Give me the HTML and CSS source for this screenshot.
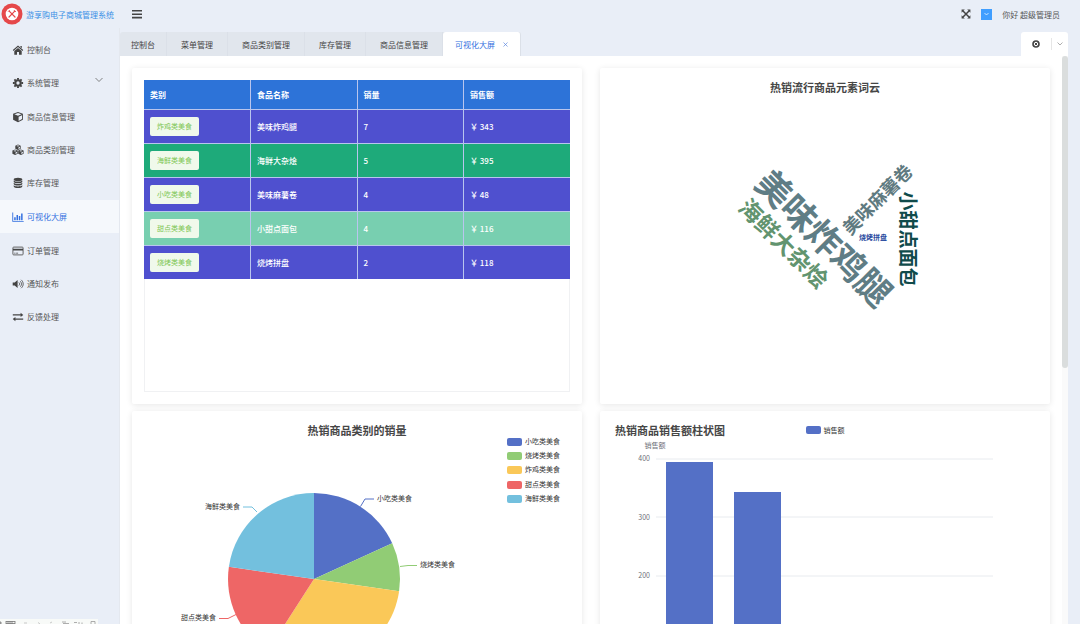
FILE: index.html
```
<!DOCTYPE html>
<html lang="zh-CN">
<head>
    <meta charset="UTF-8">
    <meta name="viewport" content="width=device-width, initial-scale=1.0">
    <title>游享购电子商城管理系统</title>
    <link rel="stylesheet" href="styles.css">
</head>
<body>

    <header class="header">
        <a class="brand" href="#">
            <svg class="logo" viewBox="0 0 22 22">
                <circle cx="11" cy="11" r="10.5" fill="#e5484a"/>
                <circle cx="11" cy="11" r="6.3" fill="#fff"/>
                <path d="M8.2 8.2l5.8 5.8M13.8 8.2L8 14" stroke="#e5484a" stroke-width="1.2" stroke-linecap="round"/>
                <path d="M7.2 8.6l1.4-1.4M13 7.2l1.8 1.8" stroke="#e5484a" stroke-width="1"/>
            </svg>
            <span>游享购电子商城管理系统</span>
        </a>
        <button class="btn toggle" type="button" aria-label="折叠菜单">
            <svg width="12" height="10" viewBox="0 0 12 10"><path d="M1 1h10v1.6H1zM1 4.4h10V6H1zM1 7.8h10v1.6H1z"/></svg>
        </button>
        <div class="user">
            <button class="btn" type="button" aria-label="全屏">
                <svg width="10" height="10" viewBox="0 0 10 10">
                    <path d="M.6.6h3.2L.6 3.8zM9.4.6v3.2L6.2.6zM.6 9.4V6.2l3.2 3.2zM9.4 9.4H6.2l3.2-3.2z"/>
                    <path d="M2 2l6 6M8 2L2 8" stroke="#444" stroke-width="1.5"/>
                </svg>
            </button>
            <button class="btn avatar" type="button" aria-label="用户菜单">
                <svg width="5" height="4" viewBox="0 0 5 4"><path d="M.5 1l2 2 2-2" fill="none" stroke="#fff" stroke-width=".7"/></svg>
            </button>
            <span>你好 超级管理员</span>
        </div>
    </header>

    <div class="wrap">
        <nav class="side">
            <a class="menu" href="#">
                <svg class="icon" viewBox="0 0 12 12"><path d="M6 1.6l5.2 4.5-.7.8L6 3.1 1.5 6.9l-.7-.8zM8.4 2h1.4v2.3L8.4 3.1zM6 4l3.7 3.1v3.6H7V7.9H5v2.8H2.3V7.1z"/></svg>
                <span>控制台</span>
            </a>
            <a class="menu sub" href="#">
                <svg class="icon" viewBox="0 0 12 12">
                    <circle cx="6" cy="6" r="2.7" fill="none" stroke="#444" stroke-width="2.1"/>
                    <path d="M6 .9v1.8M6 9.3v1.8M.9 6h1.8M9.3 6h1.8M2.4 2.4l1.2 1.2M8.4 8.4l1.2 1.2M9.6 2.4L8.4 3.6M3.6 8.4L2.4 9.6" stroke="#444" stroke-width="1.9"/>
                </svg>
                <span>系统管理</span>
                <svg class="arrow" viewBox="0 0 8 6"><path d="M.5 1L4 4.5 7.5 1" fill="none" stroke="#666" stroke-width=".8"/></svg>
            </a>
            <a class="menu" href="#">
                <svg class="icon" viewBox="0 0 12 12">
                    <path d="M6 .9l4.9 1.9v5.9L6 11.3 1.1 8.7V2.8z"/>
                    <path d="M6 2l3.6 1.3L6 4.7 2.4 3.3zM6.6 5.7l3.4-1.4v3.8L6.6 9.9z" fill="#e9eef7"/>
                </svg>
                <span>商品信息管理</span>
            </a>
            <a class="menu" href="#">
                <svg class="icon" viewBox="0 0 12 12">
                    <path d="M6 .6l2.7 1.1v3L6 5.9 3.3 4.7v-3zM3.1 5.5l2.7 1.1v3.1L3.1 11 .4 9.7V6.6zM8.9 5.5l2.7 1.1v3.1L8.9 11 6.2 9.7V6.6z"/>
                    <path d="M6 1.3l1.6.6L6 2.6l-1.6-.7zM3.1 6.3l1.6.6-1.6.7-1.6-.7zM8.9 6.3l1.6.6-1.6.7-1.6-.7zM6.4 3.4L8 2.7v1.6l-1.6.7zM3.5 8.4l1.6-.7v1.6l-1.6.8zM9.3 8.4l1.6-.7v1.6l-1.6.8z" fill="#e9eef7"/>
                </svg>
                <span>商品类别管理</span>
            </a>
            <a class="menu" href="#">
                <svg class="icon" viewBox="0 0 12 12">
                    <ellipse cx="6" cy="2.4" rx="4.3" ry="1.6"/>
                    <path d="M1.7 3.4c1.6 1.6 7 1.6 8.6 0v1.3c-.6 2-8 2-8.6 0zM1.7 5.8c1.6 1.6 7 1.6 8.6 0v1.3c-.6 2-8 2-8.6 0zM1.7 8.2c1.6 1.6 7 1.6 8.6 0v1.3c-.6 2-8 2-8.6 0z"/>
                </svg>
                <span>库存管理</span>
            </a>
            <a class="menu active" href="#">
                <svg class="icon" viewBox="0 0 12 12"><path d="M.3 1.6h.9v8.3h10.5v.9H.3zM2.2 6.3h1.5v2.9H2.2zM4.5 4h1.5v5.2H4.5zM6.8 5.1h1.5v4.1H6.8zM9.1 2.6h1.5v6.6H9.1z"/></svg>
                <span>可视化大屏</span>
            </a>
            <a class="menu" href="#">
                <svg class="icon" viewBox="0 0 12 12">
                    <rect x=".9" y="2.1" width="10.2" height="7.8" rx=".8" fill="none" stroke="#555" stroke-width=".9"/>
                    <path d="M1 3.7h10v1.9H1zM2.2 7.8h1.3v.8H2.2zM4.1 7.8h2v.8h-2z"/>
                </svg>
                <span>订单管理</span>
            </a>
            <a class="menu" href="#">
                <svg class="icon" viewBox="0 0 12 12">
                    <path d="M.7 4.4h2L5.6 1.9v8.2L2.7 7.6h-2z"/>
                    <path d="M6.9 4.5c1 .8 1 2.2 0 3M8 3.1c2 1.6 2 4.2 0 5.8M9.1 1.8c2.8 2.3 2.8 6.1 0 8.4" fill="none" stroke="#555" stroke-width=".9"/>
                </svg>
                <span>通知发布</span>
            </a>
            <a class="menu" href="#">
                <svg class="icon" viewBox="0 0 12 12"><path d="M.8 3.3h7.8V1.8l2.7 2.1-2.7 2.2V4.6H.8zM11.2 7.4H3.4V5.9L.7 8l2.7 2.2V8.7h7.8z"/></svg>
                <span>反馈处理</span>
            </a>
        </nav>

        <main class="main">
            <div class="tabbar">
                <div class="tabs">
                    <a class="tab" href="#">控制台</a>
                    <a class="tab" href="#">菜单管理</a>
                    <a class="tab" href="#">商品类别管理</a>
                    <a class="tab" href="#">库存管理</a>
                    <a class="tab" href="#">商品信息管理</a>
                    <a class="tab active" href="#">可视化大屏
                        <svg width="5" height="5" viewBox="0 0 5 5"><path d="M.5.5l4 4M4.5.5l-4 4" stroke="#5b86e0" stroke-width=".7"/></svg>
                    </a>
                </div>
                <div class="tools">
                    <button class="btn close" type="button" aria-label="关闭标签">
                        <svg width="8" height="8" viewBox="0 0 8 8">
                            <circle cx="4" cy="4" r="3" fill="none" stroke="#444" stroke-width="1.6"/>
                            <path d="M2.6 2.6l2.8 2.8M5.4 2.6L2.6 5.4" stroke="#444" stroke-width="1"/>
                        </svg>
                    </button>
                    <button class="btn more" type="button" aria-label="更多">
                        <svg width="6" height="4" viewBox="0 0 6 4"><path d="M.5.5L3 3 5.5.5" fill="none" stroke="#999" stroke-width=".8"/></svg>
                    </button>
                </div>
            </div>

            <div class="content">
                <div class="cards">
                    <section class="card">
                        <div class="tableBox">
                            <table class="table">
                                <thead>
                                    <tr><th>类别</th><th>食品名称</th><th>销量</th><th>销售额</th></tr>
                                </thead>
                                <tbody>
                                    <tr><td><span class="tag">炸鸡类美食</span></td><td>美味炸鸡腿</td><td>7</td><td>￥ 343</td></tr>
                                    <tr class="green"><td><span class="tag">海鲜类美食</span></td><td>海鲜大杂烩</td><td>5</td><td>￥ 395</td></tr>
                                    <tr><td><span class="tag">小吃类美食</span></td><td>美味麻薯卷</td><td>4</td><td>￥ 48</td></tr>
                                    <tr class="light"><td><span class="tag">甜点类美食</span></td><td>小甜点面包</td><td>4</td><td>￥ 116</td></tr>
                                    <tr><td><span class="tag">烧烤类美食</span></td><td>烧烤拼盘</td><td>2</td><td>￥ 118</td></tr>
                                </tbody>
                            </table>
                        </div>
                    </section>

                    <section class="card">
                        <div class="chartHead"><h3>热销流行商品元素词云</h3></div>
                        <svg class="chart" viewBox="0 27 450 309">
                            <g class="cloud">
                                <text transform="translate(224 170) rotate(45)" y="13" font-size="35" fill="#5f7d85">美味炸鸡腿</text>
                                <text transform="translate(184 175) rotate(45)" y="9" font-size="23" fill="#62946f">海鲜大杂烩</text>
                                <text transform="translate(278 132) rotate(-45)" y="6" font-size="18" fill="#5f7a80">美味麻薯卷</text>
                                <text transform="translate(308 171) rotate(90)" y="7" font-size="19" fill="#104b4b">小甜点面包</text>
                                <text transform="translate(273 170)" y="2" font-size="7" fill="#2a4ba0">烧烤拼盘</text>
                            </g>
                        </svg>
                    </section>

                    <section class="card">
                        <div class="chartHead"><h3>热销商品类别的销量</h3></div>
                        <svg class="chart" viewBox="0 27 450 309">
                            <path d="M182 168V82A86 86 0 0 1 260.2 132.3z" fill="#5470c6"/>
                            <path d="M182 168L260.2 132.3A86 86 0 0 1 267.1 180.2z" fill="#91cc75"/>
                            <path d="M182 168L267.1 180.2A86 86 0 0 1 135.5 240.4z" fill="#fac858"/>
                            <path d="M182 168L135.5 240.4A86 86 0 0 1 96.9 155.8z" fill="#ee6666"/>
                            <path d="M182 168L96.9 155.8A86 86 0 0 1 182 82z" fill="#73c0de"/>
                            <g class="lines">
                                <path d="M228.5 95.5L233 88h9" stroke="#5470c6"/>
                                <path d="M268 155.5l8-1h9" stroke="#91cc75"/>
                                <path d="M218 246l4 8h9" stroke="#fac858"/>
                                <path d="M104 203.5l-8 4h-9" stroke="#ee6666"/>
                                <path d="M125 101l-5-5h-9" stroke="#73c0de"/>
                            </g>
                            <g class="label">
                                <text x="245" y="90">小吃类美食</text>
                                <text x="288" y="156">烧烤类美食</text>
                                <text x="234" y="257">炸鸡类美食</text>
                                <text class="end" x="84" y="209">甜点类美食</text>
                                <text class="end" x="108" y="98">海鲜类美食</text>
                            </g>
                            <g class="label">
                                <rect x="375" y="27" width="15" height="8" rx="2" fill="#5470c6"/><text x="393" y="33">小吃类美食</text>
                                <rect x="375" y="41" width="15" height="8" rx="2" fill="#91cc75"/><text x="393" y="47">烧烤类美食</text>
                                <rect x="375" y="55" width="15" height="8" rx="2" fill="#fac858"/><text x="393" y="61">炸鸡类美食</text>
                                <rect x="375" y="70" width="15" height="8" rx="2" fill="#ee6666"/><text x="393" y="76">甜点类美食</text>
                                <rect x="375" y="84" width="15" height="8" rx="2" fill="#73c0de"/><text x="393" y="90">海鲜类美食</text>
                            </g>
                        </svg>
                    </section>

                    <section class="card">
                        <div class="chartHead left">
                            <h3>热销商品销售额柱状图</h3>
                            <span class="legend">销售额</span>
                        </div>
                        <svg class="chart" viewBox="0 27 450 309">
                            <path class="grid" d="M56 48h337M56 106h337M56 165h337M56 224h337M56 282h337"/>
                            <g class="axis">
                                <text class="name" x="55" y="37">销售额</text>
                                <text x="50" y="50">400</text>
                                <text x="50" y="109">300</text>
                                <text x="50" y="167">200</text>
                                <text x="50" y="226">100</text>
                                <text x="50" y="285">0</text>
                            </g>
                            <g fill="#5470c6">
                                <rect x="66" y="51" width="47" height="231"/>
                                <rect x="134" y="81" width="47" height="201"/>
                                <rect x="201" y="214" width="47" height="68"/>
                                <rect x="268" y="215" width="47" height="67"/>
                                <rect x="336" y="254" width="47" height="28"/>
                            </g>
                        </svg>
                    </section>
                </div>
                <div class="scroll"><div class="thumb"></div></div>
            </div>
        </main>
    </div>

    <div class="status">
        <svg width="98" height="5" viewBox="0 0 98 5">
            <path d="M0 3h1v2H0zM6 2.5h9M6 4.5h9M6 2v3M8 2v3M10 2v3M12 2v3M15 2v3" stroke="#777" stroke-width=".8" fill="none"/>
            <path d="M24 4h3M38 3.5l2 1.5M50 4l2-1" stroke="#bbb" stroke-width=".8"/>
            <path d="M62 3h4M63 4.5h6M74 3.5h3M79 3v2M82 3.5v1.5M91 5V2.5h4V5" stroke="#999" stroke-width=".8" fill="none"/>
        </svg>
    </div>

</body>
</html>
```
FILE: styles.css
```
* {
    box-sizing: border-box;
}
body {
    margin: 0;
    height: 100vh;
    display: flex;
    flex-direction: column;
    overflow: hidden;
    background-color: #e9eef7;
    color: #555;
    font-family: "Noto Sans CJK SC", sans-serif;
    font-size: 8px;
}
a {
    color: inherit;
    text-decoration: none;
}
svg {
    display: block;
    fill: #444;
}
.btn {
    display: flex;
    align-items: center;
    justify-content: center;
    padding: 0;
    border: 0;
    background: none;
    cursor: pointer;
}

/* header */
.header {
    display: flex;
    align-items: center;
    height: 28px;
    padding: 0 20px 0 1px;
}
.brand {
    display: flex;
    align-items: center;
    gap: 3px;
    width: 130px;
    color: #3a8ee6;
}
.logo {
    width: 22px;
    height: 22px;
}
.user {
    display: flex;
    align-items: center;
    gap: 10px;
    margin-left: auto;
}
.avatar {
    width: 11px;
    height: 11px;
    background-color: #409eff;
}

/* side menu */
.wrap {
    display: flex;
    flex: 1;
    min-height: 0;
}
.side {
    width: 120px;
    padding-top: 5px;
    border-right: 1px solid #e4e8ef;
}
.menu {
    display: flex;
    align-items: center;
    gap: 3px;
    height: 33px;
    padding: 0 16px 0 12px;
}
.menu .icon {
    width: 12px;
    height: 12px;
}
.menu .arrow {
    width: 8px;
    height: 6px;
    margin: 0 0 6px auto;
}
.menu.sub {
    margin-bottom: 1px;
}
.menu.active {
    margin: 1px 0;
    background-color: #f5f8fc;
    color: #3370e0;
}
.menu.active .icon {
    fill: #3370e0;
}

/* tabs */
.main {
    display: flex;
    flex: 1;
    flex-direction: column;
    min-width: 0;
    padding: 4px 12px 0 0;
}
.tabbar {
    display: flex;
    justify-content: space-between;
    height: 24px;
}
.tabs {
    display: flex;
    border-radius: 3px 3px 0 0;
    background-color: #e1e6ed;
    color: #444;
}
.tab {
    display: flex;
    align-items: center;
    padding: 0 14px;
    border-right: 1px solid #dbe0e8;
}
.tab:first-child {
    padding: 0 11px;
}
.tab.active {
    gap: 8px;
    padding: 0 12px;
    border-radius: 3px 3px 0 0;
    background-color: #fff;
    color: #3370e0;
}
.tools {
    display: flex;
    align-items: center;
    border-radius: 3px 3px 0 0;
    background-color: #fff;
}
.close {
    width: 31px;
    height: 12px;
    border-right: 1px solid #e6e6e6;
}
.more {
    width: 16px;
    height: 12px;
}

/* cards */
.content {
    display: flex;
    flex: 1;
    min-height: 0;
    background-color: #fff;
}
.cards {
    display: grid;
    flex: 1;
    grid-template-columns: 1fr 1fr;
    grid-auto-rows: min-content;
    gap: 7px 18px;
    padding: 12px;
    overflow-y: auto;
    scrollbar-width: none;
}
.card {
    display: flex;
    flex-direction: column;
    min-height: 336px;
    border-radius: 2px;
    background-color: #fff;
    box-shadow: 0 1px 6px rgba(0, 0, 0, 0.1);
}
.scroll {
    width: 6px;
    background-color: #fafafa;
}
.thumb {
    height: 55%;
    border-radius: 3px;
    background-color: #dadddd;
}

/* sales table */
.tableBox {
    flex: 1;
    margin: 12px;
    box-shadow: inset 0 0 0 1px #f0f1f3;
}
.table {
    width: 100%;
    table-layout: fixed;
    border-collapse: collapse;
    color: #fff;
    text-align: left;
}
.table tr {
    height: 34px;
    background-color: #4f50cf;
}
.table thead tr {
    height: 29px;
    background-color: #2d73d8;
}
.table .green {
    background-color: #1eaa7a;
}
.table .light {
    background-color: #78cfb0;
}
.table th,
.table td {
    padding: 0 6px;
    border-bottom: 1px solid #b9c5ee;
    border-left: 1px solid #b9c5ee;
}
.table th:first-child,
.table td:first-child {
    border-left: 0;
}
.table tr:last-child td {
    border-bottom: 0;
}
.table td {
    font-weight: 500;
}
.tag {
    display: inline-block;
    padding: 0 7px;
    border-radius: 2px;
    background-color: #f0f9eb;
    color: #7cc653;
    font-size: 7px;
    font-weight: 400;
    line-height: 19px;
}

/* charts */
.chartHead {
    display: grid;
    grid-template-columns: auto;
    justify-content: center;
    align-items: center;
    padding: 11px 15px 0;
}
.chartHead.left {
    grid-template-columns: 1fr auto 1fr;
}
.chartHead h3 {
    margin: 0;
    color: #464646;
    font-size: 11px;
    line-height: 16px;
}
.legend {
    display: flex;
    align-items: center;
    gap: 3px;
    color: #333;
    font-size: 7px;
}
.legend::before {
    content: "";
    width: 15px;
    height: 8px;
    border-radius: 2px;
    background-color: #5470c6;
}
.chart {
    width: 100%;
    overflow: visible;
}
.cloud text {
    font-weight: bold;
    text-anchor: middle;
}
.label text {
    fill: #333;
    font-size: 7px;
}
.label .end {
    text-anchor: end;
}
.lines path {
    fill: none;
}
.grid {
    stroke: #e8ebef;
}
.axis text {
    fill: #6e7079;
    font-size: 7px;
    text-anchor: end;
}
.axis .name {
    text-anchor: middle;
}

/* strip over the bottom left corner */
.status {
    position: fixed;
    bottom: 0;
    left: 0;
    background-color: #f8faf8;
}
```
